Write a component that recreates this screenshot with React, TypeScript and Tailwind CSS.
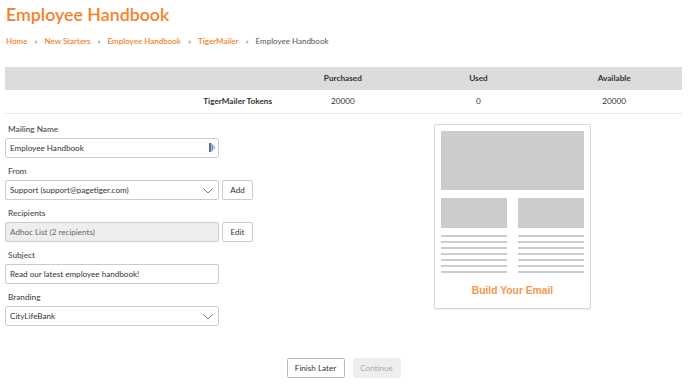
import React from "react";

const orange = "text-[#f5822a]";

function Chevron() {
  return (
    <svg width="10" height="6" viewBox="0 0 10 6" className="absolute right-[5px] top-[7px]">
      <path d="M0.5 0.5 L5 5 L9.5 0.5" fill="none" stroke="#777" strokeWidth="1" />
    </svg>
  );
}

function Field({ label, children }: { label: string; children: React.ReactNode }) {
  return (
    <div className="mb-[6px]">
      <div className="h-[14px] leading-[14px] text-[8.2px] font-semibold text-[#555] pl-[3px] mb-[2px]">{label}</div>
      {children}
    </div>
  );
}

const inputCls =
  "relative h-[20px] w-[214px] border border-[#ccc] rounded-[2px] bg-white px-[4px] text-[8.1px] leading-[18px] text-[#333]";

function SideButton({ children }: { children: React.ReactNode }) {
  return (
    <div className="h-[20px] w-[31px] ml-[3px] border border-[#ccc] rounded-[2px] bg-white text-[8.1px] leading-[18px] text-[#333] text-center">
      {children}
    </div>
  );
}

function Sep() {
  return <span className="mx-[7px] text-[#777] font-normal text-[7px]">»</span>;
}

export default function App() {
  return (
    <div className="w-[688px] h-[386px] bg-white overflow-hidden font-['Lato',sans-serif] pl-[5px] pr-[6px]">
      <div className={`pt-[2px] pl-[1px] text-[17.8px] font-semibold leading-[24px] ${orange}`}>Employee Handbook</div>
      <div className="mt-[8px] pl-[1px] flex items-center text-[8px] leading-[14px] font-semibold">
        <span className={orange}>Home</span>
        <Sep />
        <span className={orange}>New Starters</span>
        <Sep />
        <span className={orange}>Employee Handbook</span>
        <Sep />
        <span className={orange}>TigerMailer</span>
        <Sep />
        <span className="text-[#555] font-normal">Employee Handbook</span>
      </div>

      <div className="mt-[19px] text-[8.2px] text-[#333]">
        <div className="grid grid-cols-[270px_1fr_1fr_1fr] h-[23px] bg-[#dcdcdc] items-center font-bold">
          <div></div>
          <div className="text-center">Purchased</div>
          <div className="text-center">Used</div>
          <div className="text-center">Available</div>
        </div>
        <div className="grid grid-cols-[270px_1fr_1fr_1fr] h-[24px] items-center border-b border-[#e8e8e8]">
          <div className="text-right font-bold pr-[3px]">TigerMailer Tokens</div>
          <div className="text-center">20000</div>
          <div className="text-center">0</div>
          <div className="text-center">20000</div>
        </div>
      </div>

      <div className="flex">
        <div className="w-[338px] pt-[8px]">
          <Field label="Mailing Name">
            <div className={inputCls}>
              Employee Handbook
              <svg width="6" height="9" viewBox="0 0 6 9" className="absolute right-[3px] top-[4px]">
                <rect x="0" y="0" width="2.5" height="9" fill="#4f77a3" />
                <rect x="3" y="1.5" width="1.3" height="6" fill="#6f93bb" />
                <rect x="4.6" y="3" width="1.3" height="3" fill="#93afcf" />
              </svg>
            </div>
          </Field>
          <Field label="From">
            <div className="flex">
              <div className={inputCls}>
                Support (support@pagetiger.com)
                <Chevron />
              </div>
              <SideButton>Add</SideButton>
            </div>
          </Field>
          <Field label="Recipients">
            <div className="flex">
              <div className={`${inputCls} !bg-[#eeeeee] !text-[#666]`}>Adhoc List (2 recipients)</div>
              <SideButton>Edit</SideButton>
            </div>
          </Field>
          <Field label="Subject">
            <div className={inputCls}>Read our latest employee handbook!</div>
          </Field>
          <Field label="Branding">
            <div className={inputCls}>
              CityLifeBank
              <Chevron />
            </div>
          </Field>
        </div>
        <div className="flex-1 flex justify-center pt-[10px]">
          <div className="w-[157px] h-[185px] border border-[#d6d6d6] rounded-[2px] bg-white p-[6px] shadow-[0_1px_1px_rgba(0,0,0,0.06)]">
            <div className="h-[59px] bg-[#cccccc]" />
            <div className="mt-[8px] flex justify-between">
              {[0, 1].map((c) => (
                <div key={c} className="w-[66px]">
                  <div className="h-[30px] bg-[#cccccc]" />
                  <div className="mt-[7px] flex flex-col gap-[4px]">
                    {[0, 1, 2, 3, 4, 5, 6].map((i) => (
                      <div key={i} className="h-[2px] bg-[#cccccc]" />
                    ))}
                  </div>
                </div>
              ))}
            </div>
            <div className="mt-[10px] text-center font-['Liberation_Sans',Arial,sans-serif] font-bold text-[10.3px] text-[#f7964a]">
              Build Your Email
            </div>
          </div>
        </div>
      </div>

      <div className="mt-[26px] flex justify-center gap-[8px]">
        <div className="h-[20px] w-[58px] border border-[#bbb] rounded-[2px] bg-white text-[8.1px] leading-[18px] text-[#333] text-center">
          Finish Later
        </div>
        <div className="h-[20px] w-[48px] rounded-[2px] bg-[#eeeeee] text-[8.1px] leading-[20px] text-[#aaa] text-center">
          Continue
        </div>
      </div>
    </div>
  );
}
